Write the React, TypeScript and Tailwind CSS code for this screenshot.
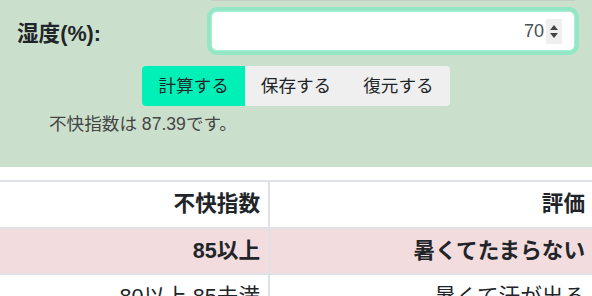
import React from "react";

const font = '"Liberation Sans", "Noto Sans CJK JP", sans-serif';

export default function App() {
  return (
    <div className="w-[592px] h-[296px] overflow-hidden bg-white" style={{ fontFamily: font }}>
      <div className="bg-[#cbe0cc] h-[167px] flex flex-col">
        <div className="flex">
          <div className="w-[211px]" />
          <div className="w-[364px] h-px bg-[#c2cec4]" />
        </div>
        <div className="flex items-center mt-[10px]">
          <div className="w-[211px] pl-[17px] pt-[5px] text-[21.6px] font-bold text-[#212529] leading-[30px]">
            湿度(%):
          </div>
          <div className="w-[364px] h-[40px] bg-white rounded-[6px] border border-[#a8f0d6] shadow-[0_0_0_4px_#93e6c6] flex items-center justify-end pr-[12px]">
            <span className="text-[18px] text-[#495057] leading-none">70</span>
            <div className="ml-[2px] w-[16px] h-[25px] bg-[#efefef] flex flex-col items-center justify-center gap-[3px]">
              <svg width="8" height="5" viewBox="0 0 8 5"><path d="M0 5 L4 0 L8 5 Z" fill="#444" /></svg>
              <svg width="8" height="5" viewBox="0 0 8 5"><path d="M0 0 L4 5 L8 0 Z" fill="#444" /></svg>
            </div>
          </div>
        </div>
        <div className="flex justify-center mt-[15px]">
          <div className="flex rounded-[4px] overflow-hidden text-[17.6px] leading-[26.4px] text-[#212529]">
            <div className="bg-[#00f0b8] px-4 py-[7px]">計算する</div>
            <div className="bg-[#efefef] px-4 py-[7px]">保存する</div>
            <div className="bg-[#efefef] px-4 py-[7px]">復元する</div>
          </div>
        </div>
        <div className="pl-[49px] mt-[5px] text-[17.6px] leading-[26px] text-[#454545]">
          不快指数は 87.39です。
        </div>
      </div>
      <div className="mt-[13px] text-[21.6px] text-[#212529]">
        <div className="flex border-t-2 border-[#dee2e6] h-[47px] font-bold">
          <div className="w-[268px] pr-[8px] flex items-center justify-end">不快指数</div>
          <div className="flex-1 border-l-2 border-[#dee2e6] pr-[7px] flex items-center justify-end">評価</div>
        </div>
        <div className="flex border-t-2 border-[#dee2e6] h-[46px] font-bold bg-[#f3dcdd]">
          <div className="w-[268px] pr-[8px] flex items-center justify-end">85以上</div>
          <div className="flex-1 border-l-2 border-[#dee2e6] pr-[7px] flex items-center justify-end">暑くてたまらない</div>
        </div>
        <div className="flex border-t-2 border-[#dee2e6] h-[46px]">
          <div className="w-[268px] pr-[8px] flex items-center justify-end">80以上 85未満</div>
          <div className="flex-1 border-l-2 border-[#dee2e6] pr-[7px] flex items-center justify-end">暑くて汗が出る</div>
        </div>
      </div>
    </div>
  );
}
